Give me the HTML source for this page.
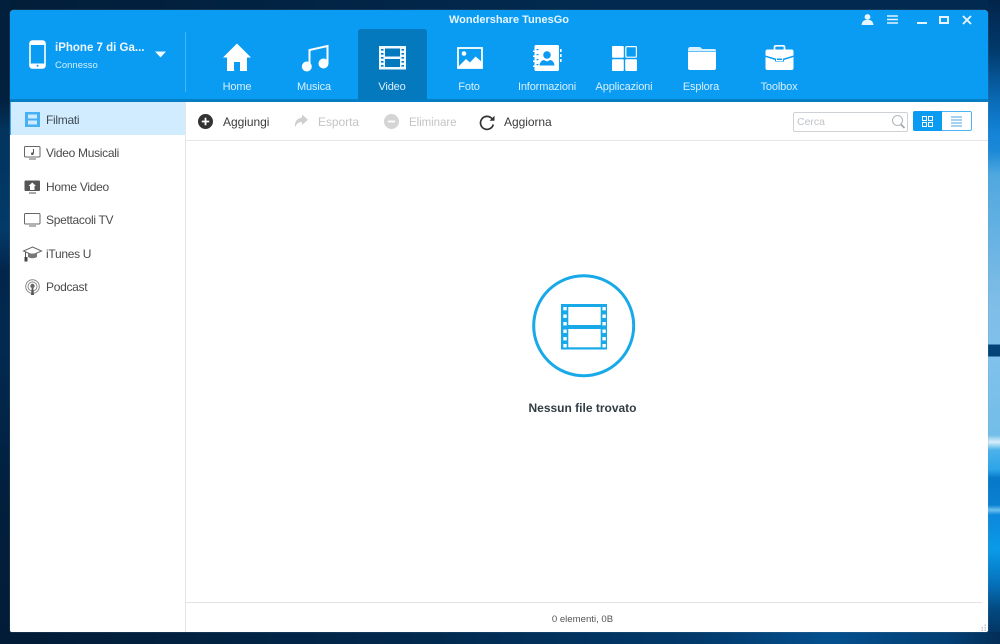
<!DOCTYPE html>
<html lang="it">
<head>
<meta charset="utf-8">
<title>Wondershare TunesGo</title>
<style>
html,body{margin:0;padding:0;width:1000px;height:644px;overflow:hidden}
body{position:relative;background:#02213f;font-family:"Liberation Sans",sans-serif}
.a{position:absolute}
.t{position:absolute;white-space:nowrap}
.n{color:#d8f0ff;font-size:11px;letter-spacing:-.15px;top:80px;width:90px;text-align:center;line-height:14px}
.s{color:#4a4a4a;font-size:12px;letter-spacing:-.3px;left:46px;line-height:16px}
.b{font-size:12px;letter-spacing:-.05px;top:114px;line-height:16px;color:#3c3c3c}
.g{color:#c4c4c4}
svg{position:absolute;display:block;overflow:visible}
</style>
</head>
<body>
<div class="a" style="left:0;top:0;width:1000px;height:10px;background:linear-gradient(90deg,#021d38,#022a50 60%,#022a50)"></div>
<div class="a" style="left:0;top:0;width:10px;height:644px;background:linear-gradient(180deg,#021f3d 0,#02213f 100px,#02345e 130px,#033a68 230px,#02264a 270px,#02294f 350px,#021f3c 500px,#021c38 644px)"></div>
<div class="a" style="left:988px;top:0;width:12px;height:644px;background:linear-gradient(180deg,#02244a 0,#023a6c 50px,#0a6fbc 105px,#1585d8 135px,#1a88d6 150px,#4fa8e0 175px,#62b0e2 225px,#7ebde6 300px,#7fc0ea 344px,#044378 345px,#044378 356px,#80c2ec 357px,#72bde9 435px,#d8effa 442px,#4cb2ea 450px,#2ba4e8 470px,#0878c8 478px,#0a80d2 505px,#6cc0ee 510px,#0c88dc 515px,#0a9ae8 550px,#0470b8 585px,#03497f 610px,#032e58 644px)"></div>
<div class="a" style="left:0;top:632px;width:1000px;height:12px;background:linear-gradient(90deg,#021b36,#02284c 40%,#023a6c 70%,#04508f 83%,#033f74 95%,#032e58)"></div>

<div class="a" style="left:10px;top:10px;width:978px;height:622px;background:#fff;border-radius:4px 4px 2px 2px;overflow:hidden;box-shadow:0 0 1px #7d93a8"></div>
<!-- header -->
<div class="a" style="left:10px;top:10px;width:978px;height:89px;background:#0a9bf3;border-radius:4px 4px 0 0"></div>
<div class="a" style="left:10px;top:99px;width:978px;height:3px;background:#067ec4"></div>
<div class="a" style="left:358px;top:29px;width:69px;height:71px;background:#0579bd;border-radius:3px 3px 0 0"></div>
<div class="a" style="left:185px;top:32px;width:1px;height:60px;background:#48b4f5"></div>

<div class="t" style="left:409px;width:200px;text-align:center;top:13px;color:#e6f5ff;font-size:11px;font-weight:bold;line-height:14px">Wondershare TunesGo</div>

<!-- phone -->
<svg style="left:29px;top:40px" width="18" height="29" viewBox="0 0 18 29"><rect x="1" y="1" width="15" height="27" rx="2.5" fill="none" stroke="#fff" stroke-width="1.6"/><rect x="1" y="1" width="15" height="4" rx="2" fill="#fff"/><rect x="1" y="23.5" width="15" height="4.5" rx="2" fill="#fff"/><circle cx="8.5" cy="25.8" r="1" fill="#0a9bf3"/></svg>
<div class="t" style="left:55px;top:41px;color:#eef8ff;font-size:11.5px;font-weight:bold;line-height:14px">iPhone 7 di Ga...</div>
<div class="t" style="left:55px;top:59px;color:#d5efff;font-size:9.5px;line-height:13px">Connesso</div>
<svg style="left:155px;top:51px" width="11" height="7"><path d="M0 0.5H11L5.5 6.5Z" fill="#eef8ff"/></svg>

<!-- nav icons -->
<svg style="left:222px;top:43px" width="30" height="29" viewBox="0 0 30 29"><path d="M15 0.5L29 14.5H25V28H18V19H12V28H5V14.5H1Z" fill="#fff"/></svg>
<svg style="left:301px;top:45px" width="28" height="27" viewBox="0 0 28 27"><path d="M8.5 21.5V5L26.500 1V18" fill="none" stroke="#fff" stroke-width="2"/><circle cx="5.800" cy="21.500" r="5" fill="#fff"/><circle cx="22.500" cy="18.500" r="5" fill="#fff"/></svg>
<svg style="left:379px;top:46px" width="27" height="24" viewBox="0 0 27 24"><rect x="0" y="0" width="27" height="23.500" fill="#eef8ff"/><rect x="6" y="2.500" width="15" height="8" fill="#0579bd"/><rect x="6" y="13" width="15" height="8" fill="#0579bd"/><g fill="#0579bd"><rect x="2" y="3" width="2.500" height="1.600"/><rect x="2" y="7" width="2.500" height="1.600"/><rect x="2" y="11" width="2.500" height="1.600"/><rect x="2" y="15" width="2.500" height="1.600"/><rect x="2" y="19" width="2.500" height="1.600"/><rect x="22.500" y="3" width="2.500" height="1.600"/><rect x="22.500" y="7" width="2.500" height="1.600"/><rect x="22.500" y="11" width="2.500" height="1.600"/><rect x="22.500" y="15" width="2.500" height="1.600"/><rect x="22.500" y="19" width="2.500" height="1.600"/></g></svg>
<svg style="left:457px;top:47px" width="26" height="22" viewBox="0 0 26 22"><rect x="1" y="1" width="24" height="20" fill="none" stroke="#fff" stroke-width="1.800"/><circle cx="7" cy="6.500" r="2.300" fill="#fff"/><path d="M1 20L9 12L13 15.500L18.500 9.500L25 15V21H1Z" fill="#fff"/></svg>
<svg style="left:533px;top:45px" width="29" height="26" viewBox="0 0 29 26"><path d="M1.500 1.500Q1.500 0 3 0H24.500Q26 0 26 1.500V24.500Q26 26 24.500 26H3Q1.500 26 1.500 24.500Z" fill="#fff"/><circle cx="14" cy="10" r="3.800" fill="#0a9bf3"/><path d="M6.500 20.500Q7 15.500 11 15L14 16.500L17 15Q21 15.500 21.500 20.500Z" fill="#0a9bf3"/><g fill="#0a9bf3"><rect x="3.500" y="4" width="2" height="1.200"/><rect x="3.500" y="9" width="2" height="1.200"/><rect x="3.500" y="14" width="2" height="1.200"/><rect x="3.500" y="19" width="2" height="1.200"/></g><g fill="#fff"><rect x="0" y="5.500" width="3" height="1.500"/><rect x="0" y="10.500" width="3" height="1.500"/><rect x="0" y="15.500" width="3" height="1.500"/><rect x="0" y="20.500" width="3" height="1.500"/><rect x="27" y="4" width="1.600" height="3"/><rect x="27" y="9" width="1.600" height="3"/><rect x="27" y="14" width="1.600" height="3"/></g></svg>
<svg style="left:612px;top:46px" width="25" height="25" viewBox="0 0 25 25"><rect x="0" y="0" width="11.800" height="11.800" rx="1" fill="#fff"/><rect x="13.800" y="0.600" width="10.600" height="10.600" rx="1" fill="none" stroke="#fff" stroke-width="1.200"/><rect x="0" y="13.200" width="11.800" height="11.800" rx="1" fill="#fff"/><rect x="13.200" y="13.200" width="11.800" height="11.800" rx="1" fill="#fff"/></svg>
<svg style="left:687px;top:46px" width="29" height="24" viewBox="0 0 29 24"><path d="M1 4Q1 1 3 1H12Q14 1 15 3H27Q29 3 29 4.500V5H1Z" fill="#d8f0ff"/><path d="M1 5.600H29V22Q29 24 27 24H3Q1 24 1 22Z" fill="#fff"/></svg>
<svg style="left:765px;top:45px" width="29" height="25" viewBox="0 0 29 25"><path d="M9.500 5V2Q9.500 0.800 11 0.800H18Q19.500 0.800 19.500 2V5" fill="none" stroke="#fff" stroke-width="1.700"/><path d="M0.500 6.500Q0.500 4.500 2.500 4.500H26.500Q28.500 4.500 28.500 6.500V10.500L18.500 13.500H10.500L0.500 10.500Z" fill="#fff"/><path d="M0.500 12L10 15V16.500H19V15L28.500 12V23Q28.500 25 26.500 25H2.500Q0.500 25 0.500 23Z" fill="#fff"/><rect x="11.500" y="12.500" width="6" height="3" fill="none" stroke="#fff" stroke-width="1"/></svg>

<div class="t n" style="left:192px">Home</div>
<div class="t n" style="left:269px">Musica</div>
<div class="t n" style="left:347px">Video</div>
<div class="t n" style="left:424px">Foto</div>
<div class="t n" style="left:502px">Informazioni</div>
<div class="t n" style="left:579px">Applicazioni</div>
<div class="t n" style="left:656px">Esplora</div>
<div class="t n" style="left:734px">Toolbox</div>

<!-- window controls -->
<svg style="left:861px;top:14px" width="13" height="11" viewBox="0 0 13 11"><circle cx="6.500" cy="3" r="2.900" fill="#e6f5ff"/><path d="M0.500 11Q1 6.500 4.500 6H8.500Q12 6.500 12.500 11Z" fill="#e6f5ff"/></svg>
<svg style="left:887px;top:15px" width="11" height="9"><path d="M0 1H11M0 4.500H11M0 8H11" stroke="#e6f5ff" stroke-width="1.400"/></svg>
<div class="a" style="left:917px;top:22px;width:10px;height:2px;background:#e6f5ff"></div>
<div class="a" style="left:939px;top:16px;width:6px;height:4px;border:2px solid #e6f5ff"></div>
<svg style="left:962px;top:15px" width="10" height="10"><path d="M1 1L9 9M9 1L1 9" stroke="#e6f5ff" stroke-width="1.900"/></svg>

<!-- sidebar -->
<div class="a" style="left:10px;top:102px;width:175px;height:33px;background:#d2ecff"></div>
<div class="a" style="left:10px;top:102px;width:1px;height:33px;background:#3ea8ee"></div>
<div class="a" style="left:185px;top:102px;width:1px;height:530px;background:#e6e6e6"></div>
<svg style="left:25px;top:112px" width="15" height="15"><rect width="15" height="15" fill="#45b0f4"/><rect x="3" y="2.500" width="9" height="4" fill="#cfeafd"/><rect x="3" y="8.500" width="9" height="4" fill="#cfeafd"/></svg>
<div class="t s" style="top:112px;color:#3e4a52">Filmati</div>
<svg style="left:24px;top:146px" width="17" height="14" viewBox="0 0 17 14"><rect x="0.500" y="0.500" width="15.500" height="10.500" rx="1" fill="none" stroke="#666" stroke-width="1"/><path d="M5 13H12" stroke="#666"/><path d="M9.500 3V7.500" stroke="#555"/><circle cx="8.300" cy="7.700" r="1.300" fill="#555"/></svg>
<div class="t s" style="top:145px">Video Musicali</div>
<svg style="left:24px;top:180px" width="17" height="14" viewBox="0 0 17 14"><rect x="0.500" y="0.500" width="15.500" height="10.500" rx="1" fill="#555"/><path d="M5 13H12" stroke="#555"/><path d="M8.250 2.500L12 6H10.500V10H6V6H4.500Z" fill="#fff"/></svg>
<div class="t s" style="top:179px">Home Video</div>
<svg style="left:24px;top:213px" width="17" height="14" viewBox="0 0 17 14"><rect x="0.500" y="0.500" width="15.500" height="10.500" rx="1" fill="none" stroke="#666" stroke-width="1"/><path d="M5 13H12" stroke="#666"/></svg>
<div class="t s" style="top:212px">Spettacoli TV</div>
<svg style="left:23px;top:246px" width="19" height="16" viewBox="0 0 19 16"><path d="M9.500 1L18.500 5L9.500 9L0.500 5Z" fill="none" stroke="#666" stroke-width="1"/><path d="M5 7.500V11Q9.500 13.500 14 11V7.500" fill="#777"/><path d="M2.500 6V11" stroke="#555"/><rect x="1.500" y="11" width="3" height="4.500" fill="#444"/></svg>
<div class="t s" style="top:246px">iTunes U</div>
<svg style="left:25px;top:279px" width="15" height="16" viewBox="0 0 15 16"><g fill="none" stroke="#888" stroke-width="1"><circle cx="7.500" cy="7.500" r="6.800"/><circle cx="7.500" cy="7.500" r="4.500"/></g><circle cx="7.500" cy="7" r="2.200" fill="#666"/><path d="M6 16L6.700 9H8.300L9 16Z" fill="#555"/></svg>
<div class="t s" style="top:279px">Podcast</div>

<!-- toolbar -->
<div class="a" style="left:186px;top:140px;width:802px;height:1px;background:#e4e6e8"></div>
<svg style="left:198px;top:114px" width="15" height="15"><circle cx="7.500" cy="7.500" r="7.500" fill="#333"/><path d="M3.800 7.500H11.200M7.500 3.800V11.200" stroke="#fff" stroke-width="1.800"/></svg>
<div class="t b" style="left:223px">Aggiungi</div>
<svg style="left:294px;top:114px" width="14" height="14" viewBox="0 0 14 14"><path d="M8 0.500L14 5.800L8 11V8Q3 7.800 1 13.500Q0 5 8 3.500Z" fill="#cfcfcf"/></svg>
<div class="t b g" style="left:318px">Esporta</div>
<svg style="left:384px;top:114px" width="15" height="15"><circle cx="7.500" cy="7.500" r="7.500" fill="#d4d4d4"/><path d="M3.800 7.500H11.200" stroke="#fff" stroke-width="1.800"/></svg>
<div class="t b g" style="left:409px;top:115px;font-size:11.5px">Eliminare</div>
<svg style="left:479px;top:115px" width="16" height="16" viewBox="0 0 16 16"><path d="M12.800 3.500A6.500 6.500 0 1 0 14.300 9.500" fill="none" stroke="#333" stroke-width="1.700"/><path d="M10.500 5.800H15.500V0.800Z" fill="#333"/></svg>
<div class="t b" style="left:504px">Aggiorna</div>

<!-- search -->
<div class="a" style="left:793px;top:112px;width:113px;height:18px;border:1px solid #ccd2d6;border-radius:2px;background:#fff"></div>
<div class="t" style="left:797px;top:115px;font-size:10.500px;color:#c0c4c8;line-height:14px">Cerca</div>
<svg style="left:891px;top:114px" width="15" height="15" viewBox="0 0 15 15"><circle cx="6.500" cy="6.500" r="5" fill="none" stroke="#b4b8bc" stroke-width="1.100"/><path d="M10 10.500L13.500 14" stroke="#a0a4a8" stroke-width="1.600"/></svg>
<div class="a" style="left:913px;top:111px;width:29px;height:20px;background:#0a9bf3;border-radius:2px 0 0 2px"></div>
<div class="a" style="left:942px;top:111px;width:29px;height:18px;border:1px solid #4cb4f5;border-left:0;background:#fff;border-radius:0 2px 2px 0"></div>
<svg style="left:922px;top:116px" width="11" height="11"><g fill="none" stroke="#fff" stroke-width="1"><rect x="0.500" y="0.500" width="4" height="4"/><rect x="6.500" y="0.500" width="4" height="4"/><rect x="0.500" y="6.500" width="4" height="4"/><rect x="6.500" y="6.500" width="4" height="4"/></g></svg>
<svg style="left:951px;top:116px" width="11" height="11"><path d="M0 1H11M0 4H11M0 7H11M0 10H11" stroke="#6fb6e6" stroke-width="1.200"/></svg>

<!-- empty state -->
<svg style="left:532px;top:274px" width="104" height="104" viewBox="0 0 104 104"><circle cx="51.700" cy="51.700" r="50" fill="none" stroke="#17a9e8" stroke-width="3"/><rect x="29" y="30" width="46" height="45.500" fill="#17a9e8"/><rect x="36.300" y="33" width="32.400" height="18" fill="#fff"/><rect x="36.300" y="55" width="32.400" height="18.300" fill="#fff"/><g fill="#fff"><rect x="31.300" y="33" width="3.400" height="3.400"/><rect x="31.300" y="40.500" width="3.400" height="3.400"/><rect x="31.300" y="48" width="3.400" height="3.400"/><rect x="31.300" y="55.500" width="3.400" height="3.400"/><rect x="31.300" y="63" width="3.400" height="3.400"/><rect x="31.300" y="70" width="3.400" height="3.400"/><rect x="70.400" y="33" width="3.400" height="3.400"/><rect x="70.400" y="40.500" width="3.400" height="3.400"/><rect x="70.400" y="48" width="3.400" height="3.400"/><rect x="70.400" y="55.500" width="3.400" height="3.400"/><rect x="70.400" y="63" width="3.400" height="3.400"/><rect x="70.400" y="70" width="3.400" height="3.400"/></g></svg>
<div class="t" style="left:482.500px;width:200px;text-align:center;top:401px;font-size:12px;font-weight:bold;color:#333d44;line-height:14px">Nessun file trovato</div>

<!-- status -->
<div class="a" style="left:186px;top:602px;width:796px;height:1px;background:#e2e2e2"></div>
<div class="t" style="left:482.500px;width:200px;text-align:center;top:613px;font-size:9.600px;color:#555;line-height:13px">0 elementi, 0B</div>
<svg style="left:981px;top:624px" width="6" height="7"><g fill="#c4c8cc"><rect x="3.500" y="0.500" width="1.500" height="1.500"/><rect x="0.500" y="3" width="1.500" height="1.500"/><rect x="3.500" y="3" width="1.500" height="1.500"/><rect x="0.500" y="5.500" width="1.500" height="1.500"/><rect x="3.500" y="5.500" width="1.500" height="1.500"/></g></svg>
</body>
</html>
